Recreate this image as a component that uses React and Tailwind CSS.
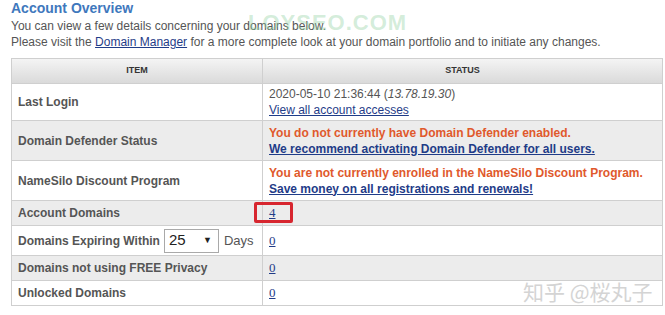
import React from 'react';

const rows = [
  { label: 'Last Login', h: 'h-[37px]', bg: 'bg-white', kind: 'login' },
  { label: 'Domain Defender Status', h: 'h-[40px]', bg: 'bg-[#ececec]', kind: 'defender' },
  { label: 'NameSilo Discount Program', h: 'h-[40px]', bg: 'bg-white', kind: 'discount' },
  { label: 'Account Domains', h: 'h-[25px]', bg: 'bg-[#ececec]', kind: 'count', value: '4', boxed: true },
  { label: 'Domains Expiring Within', h: 'h-[30px]', bg: 'bg-white', kind: 'count', value: '0', expiring: true },
  { label: 'Domains not using FREE Privacy', h: 'h-[25px]', bg: 'bg-[#ececec]', kind: 'count', value: '0' },
  { label: 'Unlocked Domains', h: 'h-[25px]', bg: 'bg-white', kind: 'count', value: '0' },
];

const Status = ({ row }) => {
  if (row.kind === 'login') {
    return (
      <div className="leading-[16px]">
        <div className="text-[#555]">
          2020-05-10 21:36:44 (<span className="italic">13.78.19.30</span>)
        </div>
        <a className="text-[#1f3c88] underline">View all account accesses</a>
      </div>
    );
  }
  if (row.kind === 'defender') {
    return (
      <div className="leading-[16px] font-bold">
        <div className="text-[#e0592c]">You do not currently have Domain Defender enabled.</div>
        <a className="text-[#1f3c88] underline">We recommend activating Domain Defender for all users.</a>
      </div>
    );
  }
  if (row.kind === 'discount') {
    return (
      <div className="leading-[16px] font-bold">
        <div className="text-[#e0592c]">You are not currently enrolled in the NameSilo Discount Program.</div>
        <a className="text-[#1f3c88] underline">Save money on all registrations and renewals!</a>
      </div>
    );
  }
  return (
    <div className="relative leading-[16px]">
      <a className="text-[#1f3c88] underline text-[13px] font-['Liberation_Serif',serif]">{row.value}</a>
      {row.boxed && (
        <span className="absolute left-[-15px] top-[-3px] w-[39px] h-[21px] border-[3px] border-[#d7262f] rounded-[2px]" />
      )}
    </div>
  );
};

export default function App() {
  return (
    <div className="relative w-[665px] h-[315px] bg-white overflow-hidden font-['Liberation_Sans',Arial,sans-serif] text-[12px] text-[#555]">
      <div className="px-[11px]">
        <h1 className="text-[14px] leading-[16px] font-bold text-[#3f78bd]">Account Overview</h1>
        <div className="mt-[2px] leading-[16px]">
          <div>You can view a few details concerning your domains below.</div>
          <div>
            Please visit the <a className="text-[#1f3c88] underline">Domain Manager</a> for a more complete look at your domain portfolio and to initiate any changes.
          </div>
        </div>

        <table className="mt-[8px] w-[652px] border-collapse border border-[#cfcfcf]">
          <thead>
            <tr className="h-[25px] bg-gradient-to-b from-[#f4f4f4] to-[#d9d9d9]">
              <th className="w-[251px] border border-[#cfcfcf] text-[9px] font-bold text-[#333] text-center">ITEM</th>
              <th className="border border-[#cfcfcf] text-[9px] font-bold text-[#333] text-center">STATUS</th>
            </tr>
          </thead>
          <tbody>
            {rows.map((row) => (
              <tr key={row.label} className={`${row.h} ${row.bg}`}>
                <td className="border border-[#cfcfcf] pl-[6px] align-middle">
                  {row.expiring ? (
                    <div className="flex items-center">
                      <span className="font-bold">{row.label}</span>
                      <div className="ml-[4px] flex items-center justify-between w-[55px] h-[24px] border border-[#a9a9a9] bg-white pl-[4px] pr-[6px]">
                        <span className="text-[15px] text-[#222]">25</span>
                        <span className="text-[9px] text-[#222]">▼</span>
                      </div>
                      <span className="ml-[5px] text-[13px]">Days</span>
                    </div>
                  ) : (
                    <span className="font-bold">{row.label}</span>
                  )}
                </td>
                <td className="border border-[#cfcfcf] pl-[6px] align-middle">
                  <Status row={row} />
                </td>
              </tr>
            ))}
          </tbody>
        </table>
      </div>

      <span className="absolute left-[248px] top-[6px] text-[22px] font-bold tracking-[1px] text-[#8fcf9f]/40">LOYSEO.COM</span>
      <span className="absolute left-[523px] top-[276px] text-[21px] text-[#d4d4d4] font-['Noto_Sans_CJK_SC',sans-serif] [text-shadow:0_0_1px_#fff]">
        知乎 @桜丸子
      </span>
    </div>
  );
}
